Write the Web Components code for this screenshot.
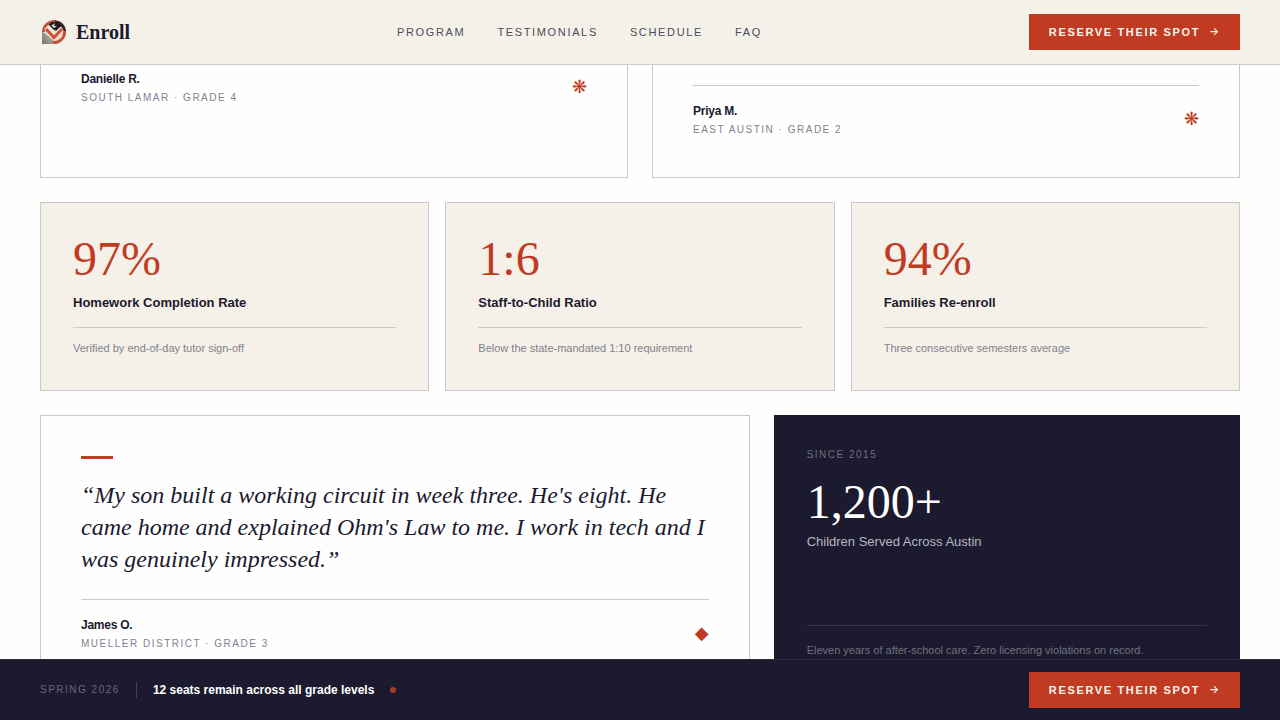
<!DOCTYPE html>
<html lang="en">
<head>
<meta charset="utf-8">
<meta name="viewport" content="width=device-width, initial-scale=1">
<title>Enroll</title>
<style>
  :root {
    --cream: #f4f1e8;
    --ink: #1b1a2e;
    --red: #c13b23;
    --line: #cacac8;
    --muted: #82828e;
    --serif: "Liberation Serif", serif;
    --sans: "Liberation Sans", sans-serif;
  }
  body { margin: 0; background: #fefefe; color: var(--ink); font-family: var(--sans); }
</style>
</head>
<body>
<enroll-page></enroll-page>
<script>
function define(name, html) {
  const template = document.createElement('template');
  template.innerHTML = html;
  customElements.define(name, class extends HTMLElement {
    constructor() {
      super();
      this.attachShadow({ mode: 'open' }).append(template.content.cloneNode(true));
    }
  });
}

define('enroll-logo', `
  <style>
    :host { display: block; }
    a { display: flex; align-items: center; gap: 8px; color: inherit; text-decoration: none; font: bold 20px/28px var(--serif); }
    svg { display: block; width: 28px; height: 28px; }
  </style>
  <a href="#">
    <svg viewBox="0 0 28 28" aria-hidden="true">
      <defs>
        <linearGradient id="corner" x1="0" y1="1" x2="1" y2="0"><stop offset="0" stop-color="#77756f"/><stop offset="1" stop-color="#c5c0b6"/></linearGradient>
      </defs>
      <path d="M2 14v12h13z" fill="url(#corner)"/>
      <circle cx="14" cy="14" r="10" fill="#eedccb"/>
      <path d="M2 13v13h13l-1-3z" fill="url(#corner)"/>
      <path d="M3.500 14A10.500 10.500 0 0 1 16 3.700" fill="none" stroke="#c4503c" stroke-width="3"/>
      <path d="M24.500 13A10.500 10.500 0 0 1 13 24.500" fill="none" stroke="#c4503c" stroke-width="3"/>
      <path d="M15 2.500C21 2.500 25.500 7 26 13h-3C22.500 9 20 6 15 5z" fill="#3a2522"/>
      <path d="M8.500 6.500L12 4h6l4 4-5 5-3-1z" fill="#1d1c1c"/>
      <path d="M11.500 7.500L15 5l-1 3 3 0-3 2z" fill="#e9e1d5"/>
      <path d="M6 9.500l8 9 8-8" fill="none" stroke="#f3e5d6" stroke-width="5"/>
      <path d="M6 11L14 19.500l8-8.500" fill="none" stroke="#c9513c" stroke-width="3"/>
    </svg>
    <slot></slot>
  </a>`);

define('nav-link', `
  <style>
    :host { display: block; }
    a { display: block; color: #4c4b59; text-decoration: none; font: 11px/16px var(--sans); letter-spacing: .15em; text-transform: uppercase; }
  </style>
  <a href="#"><slot></slot></a>`);

define('reserve-button', `
  <style>
    :host { display: block; }
    button { display: flex; align-items: center; gap: 8px; height: 36px; padding: 0 20px; border: 0; background: var(--red); color: #fdf3ec; font: bold 11px/16px var(--sans); letter-spacing: .15em; white-space: nowrap; cursor: pointer; }
    svg { display: block; width: 12px; height: 12px; }
  </style>
  <button type="button"><slot></slot>
    <svg viewBox="0 0 12 12" fill="none" stroke="currentColor" stroke-width="1.200" stroke-linecap="round" stroke-linejoin="round" aria-hidden="true"><path d="M2.800 5.700h6.600M6.400 2.700l3 3-3 3"/></svg>
  </button>`);

define('site-header', `
  <style>
    :host { display: block; position: fixed; inset: 0 0 auto; z-index: 2; background: var(--cream); border-bottom: 1px solid var(--line); }
    header { display: flex; align-items: center; justify-content: space-between; height: 64px; padding: 0 40px; }
    nav { display: flex; gap: 32px; }
  </style>
  <header>
    <enroll-logo>Enroll</enroll-logo>
    <nav aria-label="Main">
      <nav-link>Program</nav-link><nav-link>Testimonials</nav-link><nav-link>Schedule</nav-link><nav-link>FAQ</nav-link>
    </nav>
    <reserve-button>RESERVE THEIR SPOT</reserve-button>
  </header>`);

define('seats-bar', `
  <style>
    :host { display: block; position: fixed; inset: auto 0 0; z-index: 2; background: var(--ink); border-top: 1px solid #2d2e40; }
    footer { display: flex; align-items: center; justify-content: space-between; padding: 12px 40px; }
    .info { display: flex; align-items: center; gap: 16px; }
    .season { color: #6a6977; font-size: 10px; line-height: 16px; letter-spacing: .15em; }
    .divider { width: 1px; height: 16px; background: #41404f; }
    .seats { color: #fff; font-size: 12px; line-height: 16px; }
    .dot { width: 6px; height: 6px; border-radius: 50%; background: #ae3a28; }
  </style>
  <footer>
    <div class="info">
      <span class="season">SPRING 2026</span><span class="divider"></span>
      <strong class="seats">12 seats remain across all grade levels</strong><span class="dot"></span>
    </div>
    <reserve-button>RESERVE THEIR SPOT</reserve-button>
  </footer>`);

define('quote-card', `
  <style>
    :host { display: block; box-sizing: border-box; min-width: 0; padding: 40px; border: 1px solid var(--line); }
    figure { margin: 0; }
    blockquote { margin: 0; min-height: var(--quote-space, 0); font: italic 24px/32px var(--serif); }
    figcaption { display: flex; align-items: center; justify-content: space-between; padding-top: 16px; border-top: 1px solid var(--line); }
    .who { display: grid; gap: 3px; }
    .name { font-size: 12px; line-height: 18px; font-weight: bold; letter-spacing: -.02em; }
    .place { color: var(--muted); font-size: 10px; line-height: 14px; letter-spacing: .15em; }
    .mark { padding-bottom: 2px; color: var(--red); font: 18px/18px "DejaVu Sans", sans-serif; }
  </style>
  <figure>
    <blockquote><slot></slot></blockquote>
    <figcaption>
      <div class="who"><div class="name"><slot name="name"></slot></div><div class="place"><slot name="place"></slot></div></div>
      <div class="mark"><slot name="mark"></slot></div>
    </figcaption>
  </figure>`);

define('quote-text', `
  <style>
    :host { display: block; padding-bottom: 24px; }
    :host::before { content: ""; display: block; width: 32px; height: 3px; margin-bottom: 20px; background: var(--red); }
  </style>
  <slot></slot>`);

define('stat-card', `
  <style>
    :host { display: block; padding: 32px; border: 1px solid var(--line); background: #f5f0e8; }
    .value { color: var(--red); font: 48px/48px var(--serif); }
    .label { margin: 8px 0 12px; font-size: 13px; line-height: 24px; font-weight: bold; }
    .note { padding: 12px 0 2px; border-top: 1px solid var(--line); color: var(--muted); font-size: 11px; line-height: 16px; }
  </style>
  <div class="value"><slot name="value"></slot></div>
  <div class="label"><slot name="label"></slot></div>
  <div class="note"><slot></slot></div>`);

define('served-card', `
  <style>
    :host { display: flex; flex-direction: column; justify-content: space-between; padding: 32px; border: 1px solid var(--ink); background: var(--ink); }
    .since { margin-bottom: 16px; color: #72717f; font-size: 10px; line-height: 14px; letter-spacing: .15em; }
    .value { color: #fff; font: 48px/48px var(--serif); }
    .label { margin-top: 4px; color: #b8b7c2; font-size: 13px; line-height: 24px; }
    .note { padding-top: 16px; border-top: 1px solid #33334a; color: #72717f; font-size: 11px; line-height: 17px; }
  </style>
  <div>
    <div class="since"><slot name="since"></slot></div>
    <div class="value"><slot name="value"></slot></div>
    <div class="label"><slot name="label"></slot></div>
  </div>
  <div class="note"><slot></slot></div>`);

define('enroll-page', `
  <style>
    :host { display: block; }
    main { display: grid; gap: 24px; padding: 12px 40px 28px; }
    .row { display: grid; }
    .pair { grid-template-columns: 1fr 1fr; gap: 24px; }
    .stats { grid-template-columns: repeat(3, 1fr); gap: 16px; }
    .feature { grid-template-columns: 35fr 23fr; gap: 24px; }
    .tall { --quote-space: 32px; }
  </style>
  <site-header></site-header>
  <main>
    <div class="row pair">
      <quote-card><span slot="name">Danielle R.</span><span slot="place">SOUTH LAMAR · GRADE 4</span><span slot="mark">❋</span></quote-card>
      <quote-card class="tall"><span slot="name">Priya M.</span><span slot="place">EAST AUSTIN · GRADE 2</span><span slot="mark">❋</span></quote-card>
    </div>
    <div class="row stats">
      <stat-card><span slot="value">97%</span><span slot="label">Homework Completion Rate</span>Verified by end-of-day tutor sign-off</stat-card>
      <stat-card><span slot="value">1:6</span><span slot="label">Staff-to-Child Ratio</span>Below the state-mandated 1:10 requirement</stat-card>
      <stat-card><span slot="value">94%</span><span slot="label">Families Re-enroll</span>Three consecutive semesters average</stat-card>
    </div>
    <div class="row feature">
      <quote-card>
        <quote-text>“My son built a working circuit in week three. He's eight. He came home and explained Ohm's Law to me. I work in tech and I was genuinely impressed.”</quote-text>
        <span slot="name">James O.</span><span slot="place">MUELLER DISTRICT · GRADE 3</span><span slot="mark">◆</span>
      </quote-card>
      <served-card><span slot="since">SINCE 2015</span><span slot="value">1,200+</span><span slot="label">Children Served Across Austin</span>Eleven years of after-school care. Zero licensing violations on record.</served-card>
    </div>
  </main>
  <seats-bar></seats-bar>`);
</script>
</body>
</html>
